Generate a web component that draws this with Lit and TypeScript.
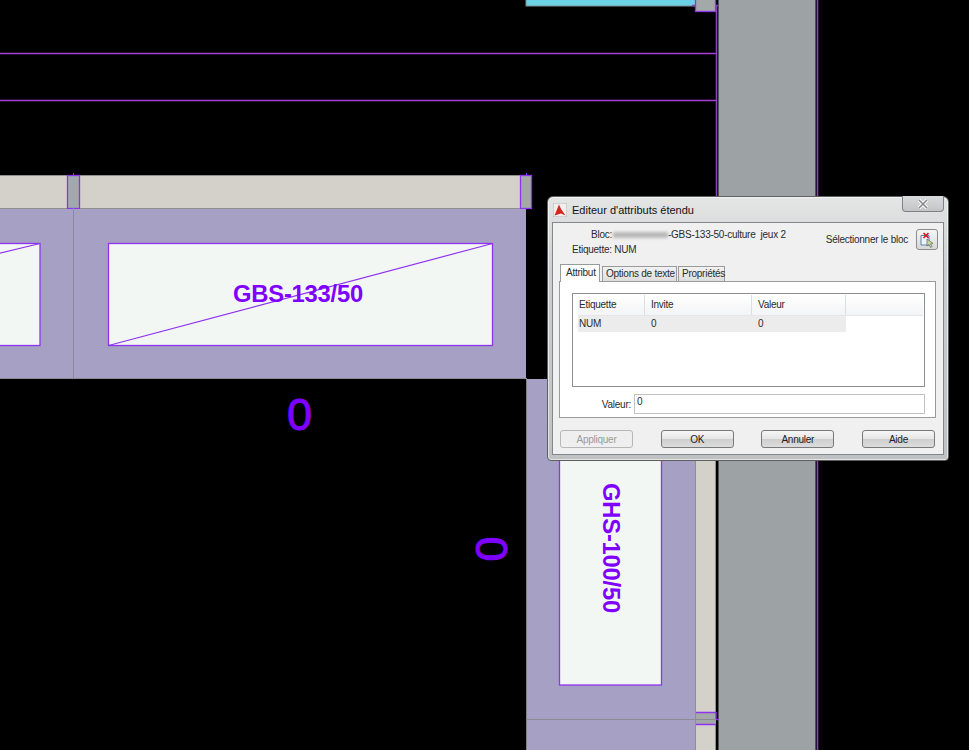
import { LitElement, html, css, svg } from 'lit';
import { customElement } from 'lit/decorators.js';

const LINE = '#a63fd8';
const WALL = '#8a40b8';
const EDGE = '#8f33f0';

// drawing behind the dialog, coordinates are the content here
@customElement('cad-drawing')
export class CadDrawing extends LitElement {
  static styles = css`
    :host { display: block; position: absolute; inset: 0; background: #000; }
    svg { display: block; }
    text { font-family: "Liberation Sans", Arial, sans-serif; fill: #7f00ff; }
    .label { font-weight: 700; font-size: 23.8px; text-anchor: middle; }
    .num { font-size: 45px; text-anchor: middle; stroke: #7f00ff; stroke-width: 1px; }
  `;

  private junction(x: number, y: number, w: number, h: number) {
    return svg`<rect x=${x + 0.5} y=${y + 0.5} width=${w} height=${h} fill="#a3a9a8" stroke=${EDGE} stroke-width="1.3" />`;
  }

  render() {
    return html`
      <svg width="969" height="750" viewBox="0 0 969 750">
        <!-- top -->
        <rect x="526" y="-2" width="170" height="8" fill="#6cd3e6" stroke="#7d8d8f" />
        <path d="M0 53.5H716M0 100.5H716" stroke=${LINE} stroke-width="1.3" />
        <rect x="718.5" y="-2" width="97" height="754" fill="#9da2a5" />
        <path d="M716.5 6V440M817.5 0V750M692 5.5H718" stroke=${WALL} stroke-width="1.6" fill="none" />
        ${this.junction(695, -2, 20, 13)}

        <!-- horizontal wall -->
        <rect x="-1" y="175.5" width="527" height="33" fill="#d4d1ca" stroke="#8f8f8c" />
        ${this.junction(67, 175, 12, 33)}
        ${this.junction(520, 175, 11, 33)}
        <path d="M73.5 173V175M526.5 173V175" stroke=${EDGE} />
        <rect x="-1" y="209" width="527" height="170" fill="#a5a0c4" />
        <path d="M0 378.5H527M73.5 208V379" stroke="#8b8b95" />

        <rect x="-20" y="243.5" width="60" height="102" fill="#f3f7f4" stroke=${EDGE} stroke-width="1.3" />
        <path d="M-20 258L40 243.5" stroke=${EDGE} stroke-width="1.2" />
        <rect x="108.5" y="243.5" width="384" height="102" fill="#f3f7f4" stroke=${EDGE} stroke-width="1.3" />
        <path d="M108.5 345.5L492.5 243.5" stroke=${EDGE} stroke-width="1.2" />
        <text class="label" x="298" y="302">GBS-133/50</text>

        <text class="num" x="299.5" y="430">0</text>
        <text class="num" transform="translate(475.5 549) rotate(90)">0</text>

        <!-- vertical wall -->
        <rect x="526" y="379" width="170" height="372" fill="#a5a0c4" />
        <path d="M526.5 379V750" stroke="#7f7f84" />
        <rect x="695.5" y="440" width="20" height="311" fill="#d4d1ca" stroke="#8f8f8c" />
        <rect x="559.5" y="440" width="102" height="245" fill="#f3f7f4" stroke=${EDGE} stroke-width="1.3" />
        <text class="label" transform="translate(603 548) rotate(90)">GHS-100/50</text>
        <rect x="696" y="712" width="20" height="12" fill="#a3a9a8" />
        <path d="M696 712.5H716V719.5H719M696 724.5H716" stroke=${EDGE} stroke-width="1.3" fill="none" />
        <path d="M526 719.5H716" stroke="#8b8b95" />
      </svg>
    `;
  }
}

@customElement('app-root')
export class AppRoot extends LitElement {
  static styles = css`
    :host {
      display: block;
      position: relative;
      width: 969px;
      height: 750px;
      overflow: hidden;
      font-family: "Liberation Sans", Arial, sans-serif;
      font-size: 10px;
      letter-spacing: -0.25px;
      color: #2b2b2b;
    }
    .window {
      position: absolute;
      left: 547px;
      top: 196px;
      width: 402px;
      height: 265px;
      box-sizing: border-box;
      padding: 0 4px 5px;
      display: flex;
      flex-direction: column;
      border: 1px solid #5c5e60;
      border-radius: 6px 6px 4px 4px;
      background: linear-gradient(#e4e5e5, #cbcdce 30%, #bfc1c2);
      box-shadow: inset 0 0 0 1px rgba(255, 255, 255, .55);
    }
    .titlebar { height: 25px; display: flex; align-items: center; gap: 5px; padding-left: 1px; flex: none; }
    .titlebar .title { font-size: 11px; letter-spacing: 0; color: #111; padding-top: 1px; }
    .appicon { width: 14px; height: 14px; display: block; margin-top: 1px; }
    .close {
      position: absolute; right: 4px; top: -1px;
      width: 42px; height: 16px;
      box-sizing: border-box;
      display: flex; align-items: center; justify-content: center;
      border: 1px solid #7f8284; border-top: none;
      border-radius: 0 0 4px 4px;
      background: linear-gradient(#d9dadb, #c3c5c6);
    }
    .client {
      flex: 1;
      display: flex;
      flex-direction: column;
      border: 1px solid #85888a;
      background: #f0f0f0;
    }
    .info { height: 40px; display: flex; justify-content: space-between; flex: none; padding-right: 5px; }
    .info .left { padding-top: 4px; line-height: 15px; }
    .bloc { display: flex; margin-left: 38px; white-space: pre; align-items: center; }
    .blur { width: 55px; height: 6px; margin-left: 1px; background: #b9b9b9; filter: blur(1.5px); }
    .etq { margin-left: 19px; }
    .pick { display: flex; align-items: center; gap: 8px; padding-top: 6px; align-self: flex-start; }
    .pickbtn {
      width: 22px; height: 21px; box-sizing: border-box;
      border: 1px solid #8a8c8e; border-radius: 3px;
      background: linear-gradient(#f5f5f5, #d8d8d8);
      display: flex; align-items: center; justify-content: center;
    }
    .tabs { display: flex; align-items: flex-end; height: 18px; margin-left: 7px; flex: none; position: relative; z-index: 1; }
    .tab {
      height: 15px; box-sizing: border-box; padding: 0 3px; line-height: 14px;
      border: 1px solid #9a9a9a; border-bottom: none;
      background: linear-gradient(#f2f2f2, #dedede);
      margin-right: 1px;
      white-space: nowrap;
    }
    .tab.active { height: 18px; background: #fff; width: 40px; padding-left: 5px; line-height: 15px; margin-bottom: -1px; }
    .tab.opts { width: 75px; margin-left: 1px; }
    .tab.props { width: 47px; }
    .panel {
      height: 137px; margin: 0 7px 0 6px; flex: none; box-sizing: border-box;
      border: 1px solid #9a9a9a; background: #fff;
      padding: 11px 10px 0 12px;
    }
    .list { height: 94px; box-sizing: border-box; border: 1px solid #8b8f92; padding: 1px 1px 1px 5px; background: #fff; }
    .row { display: grid; grid-template-columns: 67px 107px 94px; }
    .row > div { padding-left: 6px; box-sizing: border-box; }
    .row > div:first-child { padding-left: 1px; }
    .head { height: 20px; line-height: 20px; background: linear-gradient(#fff, #f3f4f5); border-bottom: 1px solid #e6e6e6; }
    .head > div { border-right: 1px solid #dcdfe2; }
    .body { height: 16px; line-height: 16px; background: #ececec; width: 268px; }
    .value { display: flex; align-items: center; justify-content: flex-end; gap: 3px; margin-top: 7px; }
    .input {
      width: 291px; height: 20px; box-sizing: border-box;
      border: 1px solid #c0c2c4; background: #fff; padding-left: 2px; line-height: 13px;
    }
    .actions { flex: 1; display: flex; align-items: flex-start; padding: 12px 8px 0 7px; justify-content: space-between; }
    button {
      height: 18px; box-sizing: border-box; margin: 0; padding: 0;
      font: inherit; letter-spacing: inherit; color: #222; width: 73px;
      border: 1px solid #77797b; border-radius: 3px;
      background: linear-gradient(#f6f6f6 0, #e6e6e6 48%, #cfcfcf 52%, #dcdcdc);
    }
    button:disabled { border-color: #b5b7b8; background: #efefef; color: #9b9b9b; }
  `;

  render() {
    return html`
      <cad-drawing></cad-drawing>
      <div class="window">
        <div class="titlebar">
          <svg class="appicon" viewBox="0 0 14 14">
            <rect width="14" height="14" fill="#f2eeee" stroke="#b0b0b0" />
            <path d="M1.5 12.5L6 1.5L8 6L12.5 12.5L8 10.5Z" fill="#d3261f" />
          </svg>
          <span class="title">Editeur d'attributs étendu</span>
        </div>
        <div class="close">
          <svg width="12" height="10" viewBox="0 0 12 10">
            <path d="M2 1L10 9M10 1L2 9" stroke="#fff" stroke-width="3.4" />
            <path d="M2 1L10 9M10 1L2 9" stroke="#85888b" stroke-width="1.6" />
          </svg>
        </div>
        <div class="client">
          <div class="info">
            <div class="left">
              <div class="bloc">Bloc:<span class="blur"></span>-GBS-133-50-culture  jeux 2</div>
              <div class="etq">Etiquette: NUM</div>
            </div>
            <div class="pick">
              <span>Sélectionner le bloc</span>
              <div class="pickbtn">
                <svg width="16" height="16" viewBox="0 0 16 16">
                  <path d="M2 3.5H10V13H2Z" fill="#eef3fb" stroke="#5f7fae" />
                  <path d="M4.5 1L9.5 6M9.5 1L4.5 6" stroke="#d8191c" stroke-width="1.6" />
                  <path d="M8 7L8 14L10 12.5L11.5 15.5L13 14.5L11.5 12L14 11.5Z" fill="#c8d8a0" stroke="#5d6a55" stroke-width=".7" />
                </svg>
              </div>
            </div>
          </div>
          <div class="tabs">
            <div class="tab active">Attribut</div>
            <div class="tab opts">Options de texte</div>
            <div class="tab props">Propriétés</div>
          </div>
          <div class="panel">
            <div class="list">
              <div class="row head"><div>Etiquette</div><div>Invite</div><div>Valeur</div></div>
              <div class="row body"><div>NUM</div><div>0</div><div>0</div></div>
            </div>
            <div class="value"><span>Valeur:</span><div class="input">0</div></div>
          </div>
          <div class="actions">
            <button disabled>Appliquer</button>
            <button>OK</button>
            <button>Annuler</button>
            <button>Aide</button>
          </div>
        </div>
      </div>
    `;
  }
}
